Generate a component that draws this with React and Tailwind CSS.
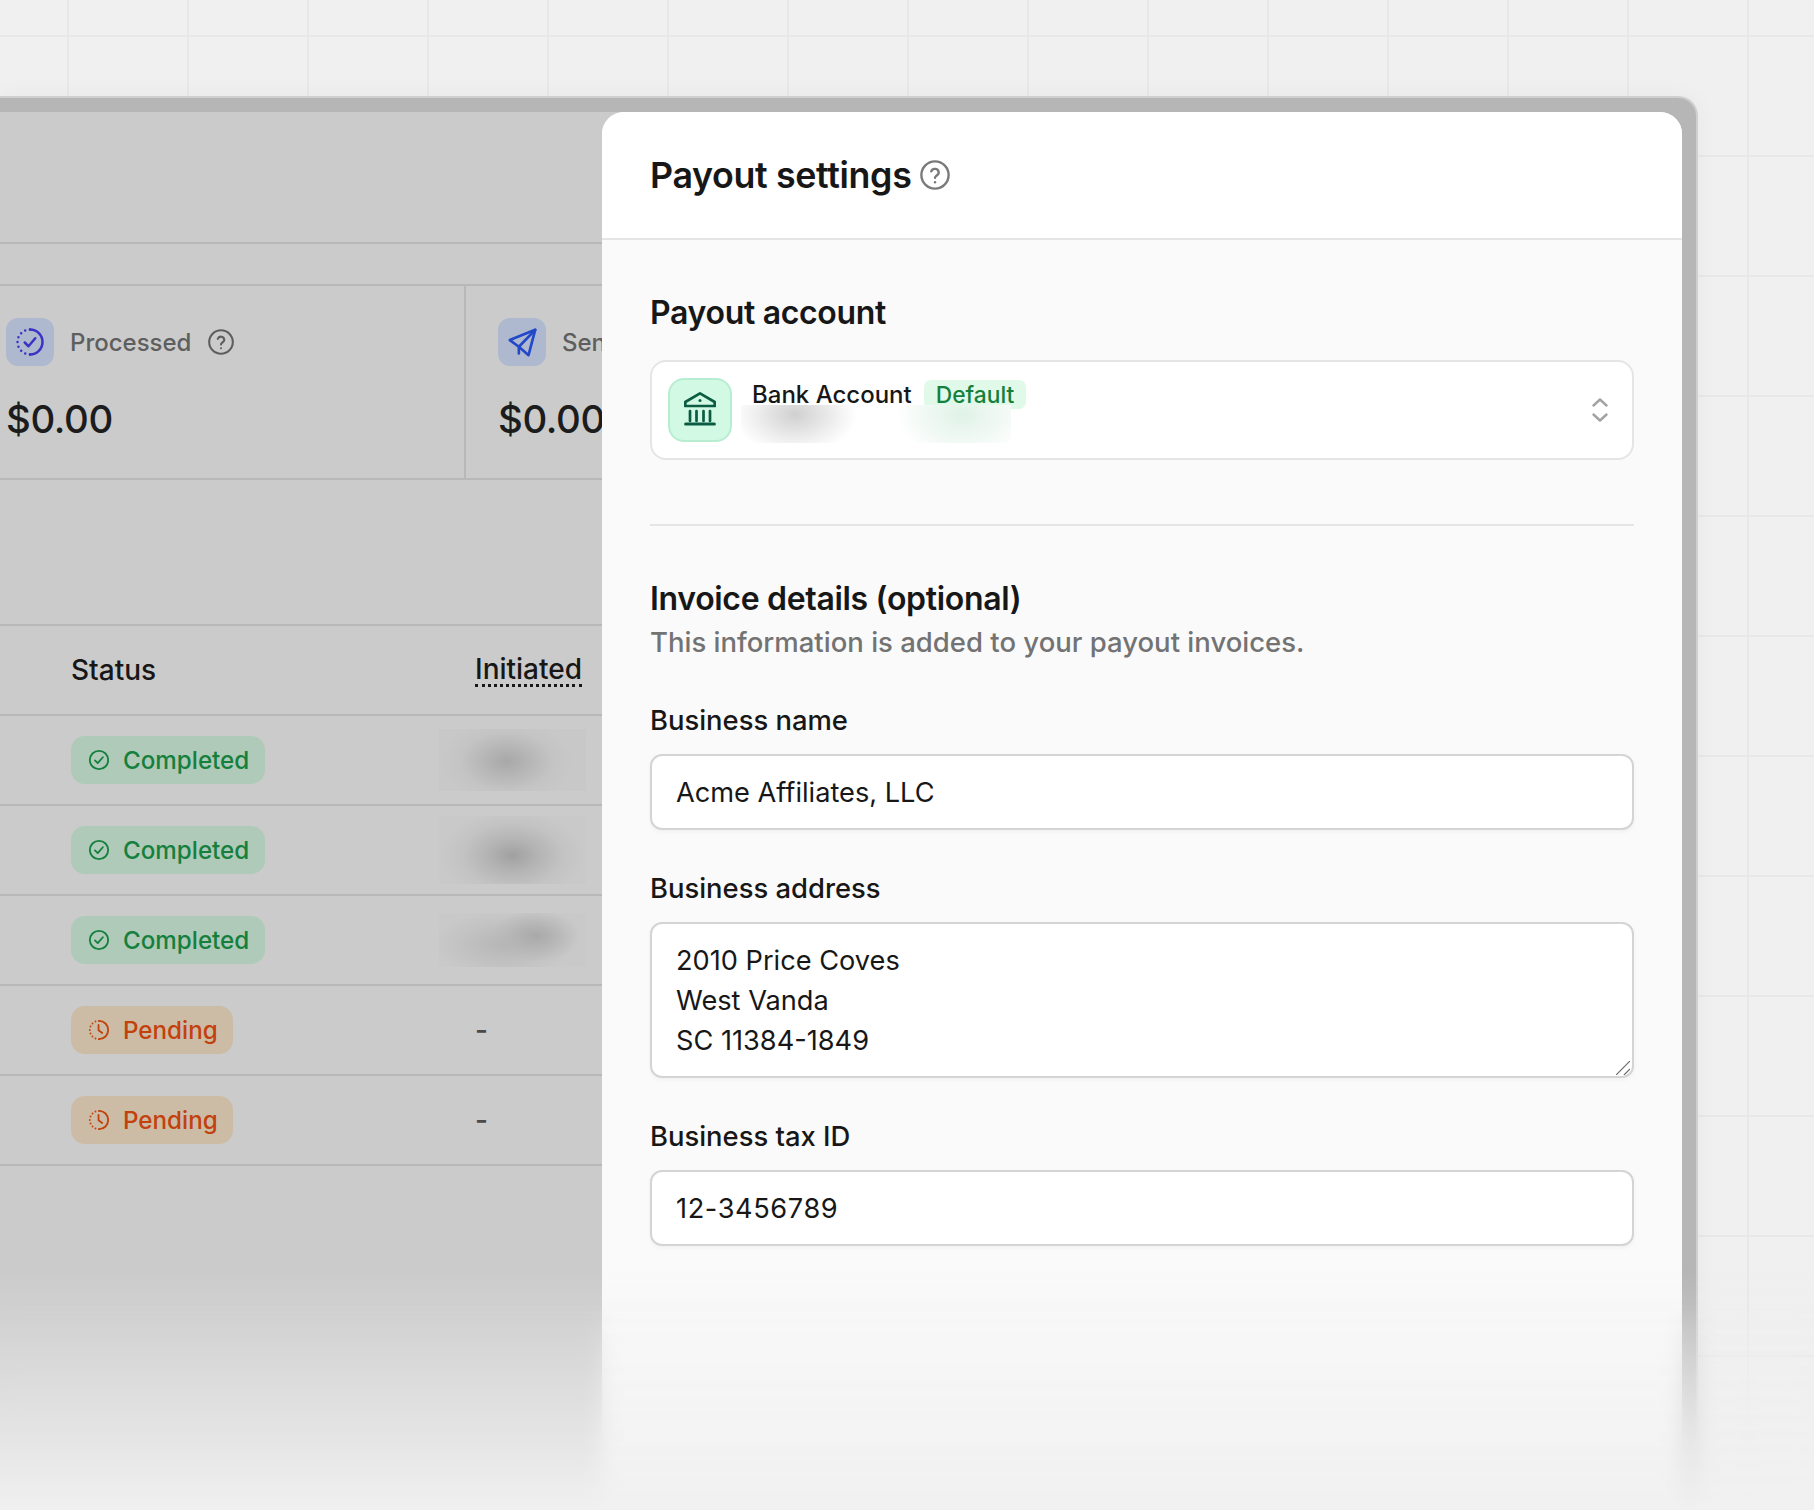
import React from 'react';

const HelpIcon = ({ className }) => (
  <svg viewBox="0 0 24 24" fill="none" stroke="currentColor" strokeWidth="1.9" strokeLinecap="round" strokeLinejoin="round" className={className}>
    <circle cx="12" cy="12" r="10.9" />
    <path d="M9 9.1a3.1 3.1 0 0 1 6 1c0 2-3 2.5-3 4.1" />
    <path d="M12 17.8h.01" />
  </svg>
);

const ProcessedIcon = () => (
  <svg viewBox="0 0 24 24" fill="none" stroke="#3a34c4" strokeWidth="2" strokeLinecap="round" strokeLinejoin="round" className="w-[30px] h-[30px]">
    <path d="M12 2a10 10 0 1 1 0 20" />
    <path d="M12 22a10 10 0 0 1 0-20" strokeDasharray="0 3.9" />
    <path d="M7.8 12.4l3 3 5.4-6.4" />
  </svg>
);

const PlaneIcon = () => (
  <svg viewBox="0 0 24 24" fill="none" stroke="#2348c8" strokeWidth="2.2" strokeLinecap="round" strokeLinejoin="round" className="w-[29px] h-[29px]">
    <path d="M22.5 1.5L1.5 10l7.5 5.5L17 22.5z" />
    <path d="M22.5 1.5L9 15.5v5.5" />
  </svg>
);

const CheckIcon = () => (
  <svg viewBox="0 0 24 24" fill="none" stroke="currentColor" strokeWidth="2" strokeLinecap="round" strokeLinejoin="round" className="w-[22px] h-[22px] shrink-0">
    <circle cx="12" cy="12" r="10" />
    <path d="M7.6 12.4l3 3 5.6-6.4" />
  </svg>
);

const ClockIcon = () => (
  <svg viewBox="0 0 24 24" fill="none" stroke="currentColor" strokeWidth="2" strokeLinecap="round" strokeLinejoin="round" className="w-[22px] h-[22px] shrink-0">
    <path d="M12 2a10 10 0 1 1 0 20" />
    <path d="M12 22a10 10 0 0 1 0-20" strokeDasharray="0 3.9" />
    <path d="M11.5 6.5v5.8l4 3" />
  </svg>
);

const BankIcon = () => (
  <svg viewBox="0 0 32 34" fill="none" stroke="#0c5c44" strokeWidth="2.7" strokeLinecap="round" strokeLinejoin="round" className="w-[32px] h-[34px] -mt-[2px]">
    <path d="M16 1.4L30.7 10v4H1.3v-4z" />
    <circle cx="16" cy="8.6" r="1.5" fill="#0c5c44" stroke="none" />
    <path d="M6 19v10M12.5 19v10M19.5 19v10M26 19v10" />
    <path d="M1.6 32h28.8" strokeWidth="3" />
  </svg>
);

const ROWS = [
  {
    status: 'Completed',
    blob: 'bg-[radial-gradient(ellipse_66px_42px_at_46%_52%,#a8a8a8,#b6b6b6_35%,#c4c4c4_70%,#c8c8c8)]',
    h: 'h-[62px]',
  },
  {
    status: 'Completed',
    blob: 'bg-[radial-gradient(ellipse_72px_46px_at_50%_58%,#a0a0a0,#b4b4b4_35%,#c3c3c3_70%,#c9c9c9)]',
    h: 'h-[68px]',
  },
  {
    status: 'Completed',
    blob: 'bg-[radial-gradient(ellipse_44px_26px_at_66%_42%,#a9a9a9,#b6b6b680_70%,transparent),radial-gradient(ellipse_70px_34px_at_44%_58%,#b6b6b6,#c4c4c4_70%,#c9c9c9)]',
    h: 'h-[54px]',
  },
  { status: 'Pending' },
  { status: 'Pending' },
];

const StatusBadge = ({ status }) =>
  status === 'Completed' ? (
    <span className="inline-flex items-center gap-[13px] h-[48px] w-[194px] pl-[17px] rounded-[14px] bg-[#afcab8] text-[#15803d] text-[24.2px] font-medium">
      <CheckIcon />
      <span className="pt-[2px]">Completed</span>
    </span>
  ) : (
    <span className="inline-flex items-center gap-[13px] h-[48px] w-[162px] pl-[17px] rounded-[14px] bg-[#ccbca6] text-[#c2410c] text-[24.2px] font-medium">
      <ClockIcon />
      <span className="pt-[2px]">Pending</span>
    </span>
  );

const Field = ({ label, value, top, inputClass = '' }) => (
  <div className={top}>
    <label className="block text-[27.4px] leading-[36px] font-medium text-[#171717]">{label}</label>
    <input
      readOnly
      defaultValue={value}
      className={`mt-[16px] block w-full h-[76px] px-[24px] rounded-[12px] border-2 border-[#d4d4d4] bg-white text-[27.2px] text-[#171717] shadow-[0_2px_4px_rgba(0,0,0,0.04)] outline-none ${inputClass}`}
    />
  </div>
);

export default function App() {
  return (
    <div className="relative w-[1814px] h-[1510px] overflow-hidden bg-[#f0f0f0] font-['Inter',sans-serif] bg-[linear-gradient(to_right,#e8e8e8_2px,transparent_2px),linear-gradient(to_bottom,#e8e8e8_2px,transparent_2px)] bg-[size:120px_120px] bg-[position:67px_35px]">
      <div className="pt-[96px] w-[1698px] h-[1510px]">
        {/* dimmed page behind the panel */}
        <div className="h-full bg-[#b6b6b6] pt-[14px] pr-[14px] rounded-tr-[20px] border-t-2 border-r-2 border-[#cfcfcf] shadow-[0_0_24px_rgba(0,0,0,0.04)]">
          <div className="flex h-full bg-[#cbcbcb] rounded-tr-[22px]">
            <div className="w-[602px] shrink-0 overflow-hidden">
              <div className="h-[132px] border-b-2 border-[#b8b8b8]" />
              <div className="h-[42px] border-b-2 border-[#b8b8b8]" />
              <div className="flex h-[194px] border-b-2 border-[#b8b8b8]">
                <div className="w-[466px] shrink-0 pl-[6px] pt-[32px] border-r-2 border-[#b8b8b8]">
                  <div className="flex items-center">
                    <div className="w-[48px] h-[48px] rounded-[12px] bg-[#aeb9cf] flex items-center justify-center">
                      <ProcessedIcon />
                    </div>
                    <span className="ml-[16px] pt-[2px] text-[24px] font-medium text-[#5e5e5e]">Processed</span>
                    <HelpIcon className="ml-[17px] w-[26px] h-[26px] text-[#5e5e5e]" />
                  </div>
                  <div className="mt-[27px] text-[38.4px] leading-[52px] font-medium tracking-[-0.01em] text-[#1c1c1c]">$0.00</div>
                </div>
                <div className="pl-[32px] pt-[32px] whitespace-nowrap">
                  <div className="flex items-center">
                    <div className="w-[48px] h-[48px] rounded-[12px] bg-[#aeb9cf] flex items-center justify-center">
                      <PlaneIcon />
                    </div>
                    <span className="ml-[16px] pt-[2px] text-[24px] font-medium text-[#5e5e5e]">Sent</span>
                  </div>
                  <div className="mt-[27px] text-[38.4px] leading-[52px] font-medium tracking-[-0.01em] text-[#1c1c1c]">$0.00</div>
                </div>
              </div>

              <div className="mt-[144px] border-t-2 border-[#b8b8b8]">
                <div className="flex items-center h-[90px] border-b-2 border-[#b8b8b8] text-[#171717] text-[28px] font-medium">
                  <span className="w-[475px] pl-[71px] shrink-0">Status</span>
                  <span className="leading-[30px] border-b-[3px] border-dotted border-[#171717] whitespace-nowrap">Initiated</span>
                </div>
                {ROWS.map((row, i) => (
                  <div key={i} className="flex items-center h-[90px] border-b-2 border-[#b8b8b8]">
                    <div className="w-[475px] pl-[71px] shrink-0">
                      <StatusBadge status={row.status} />
                    </div>
                    {row.blob ? (
                      <div className={`-ml-[36px] w-[147px] ${row.h} ${row.blob}`} />
                    ) : (
                      <span className="text-[28px] font-medium text-[#4a4a4a]">-</span>
                    )}
                  </div>
                ))}
              </div>
            </div>

            {/* Payout settings sheet */}
            <div className="flex-1 bg-[#fafafa] rounded-t-[22px] overflow-hidden">
              <div className="flex items-center h-[128px] pl-[48px] bg-white border-b-2 border-[#e5e5e5]">
                <h2 className="pt-[2px] text-[35.8px] font-semibold tracking-[-0.01em] text-[#171717]">Payout settings</h2>
                <HelpIcon className="ml-[9px] w-[30px] h-[30px] text-[#7a7a7a]" />
              </div>
              <div className="px-[48px]">
                <h3 className="mt-[53px] text-[32px] leading-[40px] font-semibold tracking-[-0.01em] text-[#171717]">Payout account</h3>
                <div className="relative mt-[27px] flex items-center justify-between h-[100px] pl-[16px] pr-[24px] rounded-[16px] border-2 border-[#e5e5e5] bg-white">
                  <div className="flex items-start">
                    <div className="w-[64px] h-[64px] rounded-[16px] border-2 border-[#b9edd2] bg-[#d1f9e3] flex items-center justify-center">
                      <BankIcon />
                    </div>
                    <div className="ml-[20px] flex items-center h-[32px]">
                      <span className="pt-[2px] text-[24px] font-medium text-[#171717]">Bank Account</span>
                      <span className="ml-[12px] px-[12px] h-[29px] leading-[29px] rounded-[7px] bg-[#e1f9e9] text-[#15803d] text-[22.8px] font-medium">Default</span>
                    </div>
                  </div>
                  <svg viewBox="0 0 16 24" fill="none" stroke="#a3a3a3" strokeWidth="2.4" strokeLinecap="round" strokeLinejoin="round" className="w-[16px] h-[24px]">
                    <path d="M1.5 7.5L8 1.5l6.5 6" />
                    <path d="M1.5 16.5L8 22.5l6.5-6" />
                  </svg>
                  <div className="absolute left-[89px] top-[43px] w-[270px] h-[38px] bg-[radial-gradient(ellipse_62px_40px_at_20%_25%,#d0d0d0,#f4f4f4_75%,transparent),radial-gradient(ellipse_66px_44px_at_82%_25%,#e0f2e7,#f6fbf8_75%,transparent),linear-gradient(#ffffff,#ffffff)]" />
                </div>

                <div className="mt-[64px] h-[2px] bg-[#e5e5e5]" />

                <h3 className="mt-[53px] text-[32px] leading-[40px] font-semibold tracking-[-0.01em] text-[#171717]">Invoice details (optional)</h3>
                <p className="mt-[3px] text-[27.5px] leading-[40px] font-medium text-[#737373]">This information is added to your payout invoices.</p>

                <Field label="Business name" value="Acme Affiliates, LLC" top="mt-[40px]" />

                <div className="mt-[39px]">
                  <label className="block pt-[1px] text-[27.4px] leading-[36px] font-medium text-[#171717]">Business address</label>
                  <div className="relative mt-[16px]">
                    <textarea
                      readOnly
                      defaultValue={'2010 Price Coves\nWest Vanda\nSC 11384-1849'}
                      className="block w-full h-[156px] px-[24px] pt-[17px] rounded-[12px] border-2 border-[#d4d4d4] bg-white text-[27.2px] leading-[40px] text-[#171717] shadow-[0_2px_4px_rgba(0,0,0,0.04)] outline-none resize-none"
                    />
                    <svg viewBox="0 0 14 14" fill="none" stroke="#6b6b6b" strokeWidth="1.2" className="absolute right-[4px] bottom-[3px] w-[14px] h-[14px]">
                      <path d="M0 14L14 0" />
                      <path d="M8 14l6-6" />
                    </svg>
                  </div>
                </div>

                <Field label="Business tax ID" value="12-3456789" top="mt-[40px]" inputClass="tracking-[0.6px]" />
              </div>
            </div>
          </div>
        </div>
      </div>

      {/* fade-out at the bottom of the picture */}
      <div className="absolute inset-x-0 bottom-0 h-[210px] backdrop-blur-[10px] [mask-image:linear-gradient(to_bottom,transparent,black_70%)]" />
      <div className="absolute inset-x-0 bottom-0 h-[240px] bg-gradient-to-b from-[#f0f0f000] to-[#f0f0f0]" />
    </div>
  );
}
